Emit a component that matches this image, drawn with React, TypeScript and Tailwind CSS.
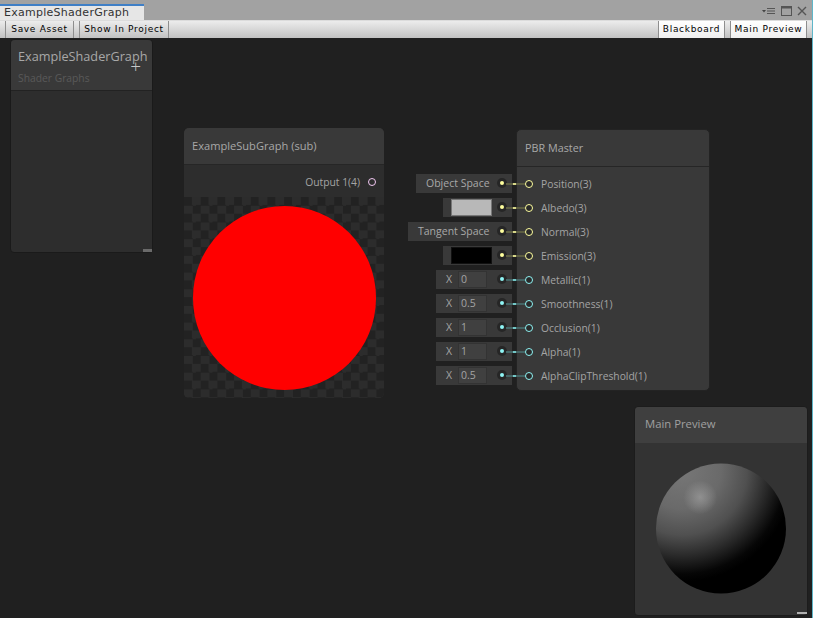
const ports = [
  { label: "Position(3)", kind: "text", value: "Object Space", width: "w-[96px]", color: "yellow" },
  { label: "Albedo(3)", kind: "color", value: "bg-[#b8b8b8] border-[#777777]", width: "w-[69px]", color: "yellow" },
  { label: "Normal(3)", kind: "text", value: "Tangent Space", width: "w-[104px]", color: "yellow" },
  { label: "Emission(3)", kind: "color", value: "bg-black border-[#111111]", width: "w-[69px]", color: "yellow" },
  { label: "Metallic(1)", kind: "x", value: "0", width: "w-[76px]", color: "cyan" },
  { label: "Smoothness(1)", kind: "x", value: "0.5", width: "w-[76px]", color: "cyan" },
  { label: "Occlusion(1)", kind: "x", value: "1", width: "w-[76px]", color: "cyan" },
  { label: "Alpha(1)", kind: "x", value: "1", width: "w-[76px]", color: "cyan" },
  { label: "AlphaClipThreshold(1)", kind: "x", value: "0.5", width: "w-[76px]", color: "cyan" },
];

const checker =
  "bg-[repeating-conic-gradient(#2c2c2c_0_25%,#222222_0_50%)] bg-[length:16.7px_16.7px]";

function ToolbarButton({ label, width, active }: { label: string; width: string; active?: boolean }) {
  return (
    <div
      className={`flex h-full items-center justify-center border-x border-[#8e8e8e] text-[9px] tracking-[0.7px] text-black ${width} ${
        active ? "bg-gradient-to-b from-white to-[#efefef]" : ""
      }`}
    >
      {label}
    </div>
  );
}

function PortRow({ port }: { port: (typeof ports)[number] }) {
  const yellow = port.color === "yellow";
  const ring = yellow ? "border-[#ffff9e]" : "border-[#8ff5f5]";
  const dot = yellow ? "bg-[#ffff9e]" : "bg-[#8ff5f5]";
  const wire = yellow ? "bg-[#5c5d42]" : "bg-[#446464]";
  const wireDash = yellow ? "bg-[#d8d88a]" : "bg-[#74c8c8]";

  return (
    <div className="relative flex h-[24px] items-center pl-[24px] pt-[2px] text-[10.3px] text-[#a4a4a4]">
      {/* inline control hanging off the left side of the node */}
      <div
        className={`absolute right-full top-[2px] mr-[5px] flex h-[19px] items-center bg-[#393939] ${port.width}`}
      >
        {port.kind === "text" && (
          <span className="ml-[10px] text-[10.5px] leading-[15px] text-[#a8a8a8]">{port.value}</span>
        )}
        {port.kind === "color" && (
          <div className={`ml-[8px] h-[17px] w-[41px] border ${port.value}`} />
        )}
        {port.kind === "x" && (
          <>
            <span className="ml-[10px] w-[12px] text-[10.5px]">X</span>
            <div className="flex h-[17px] w-[29px] items-center border border-[#333333] bg-[#404040] pl-[2px] text-[10.5px]">
              {port.value}
            </div>
          </>
        )}
        <div className="absolute right-[5px] top-[4px] flex h-[10px] w-[10px] items-center justify-center rounded-full bg-[#262626]">
          <div className={`h-[4px] w-[4px] rounded-full ${dot}`} />
        </div>
      </div>
      <div className={`absolute left-[-11px] top-[11px] h-[2px] w-[19px] ${wire}`} />
      <div className={`absolute left-[-4px] top-[11px] h-[2px] w-[3px] ${wireDash}`} />
      <div
        className={`absolute left-[8px] top-[8px] h-[8px] w-[8px] rounded-full border ${ring} bg-[#2a2a2a]`}
      />
      <span>{port.label}</span>
    </div>
  );
}

export default function App() {
  return (
    <div className="relative flex h-[618px] w-[813px] flex-col overflow-hidden border-r border-[#5fb6c9] font-['Open_Sans','Noto_Sans',sans-serif]">
      {/* window tab strip */}
      <div className="flex h-[20px] items-end justify-between bg-[#a2a2a2] font-['DejaVu_Sans',sans-serif]">
        <div className="h-[16px] w-[144px] border-t-2 border-[#3f7fc6] bg-[#e6e6e6] pl-[4px] text-[11px] leading-[14px] tracking-[0.27px] text-[#333]">
          ExampleShaderGraph
        </div>
        <div className="mb-[4px] mr-[5px] flex items-center gap-[5px]">
          <svg width="14" height="9" viewBox="0 0 14 9">
            <path d="M0 3h4L2 5.5z" fill="#444" />
            <path d="M5 1.5h8M5 4h8M5 6.5h8" stroke="#555" strokeWidth="1" />
          </svg>
          <svg width="11" height="10" viewBox="0 0 11 10">
            <rect x="0.5" y="0.5" width="10" height="9" fill="none" stroke="#555" />
            <rect x="0.5" y="0.5" width="10" height="2" fill="#555" />
          </svg>
          <svg width="10" height="10" viewBox="0 0 10 10">
            <path d="M1 1l8 8M9 1l-8 8" stroke="#555" strokeWidth="1.4" />
          </svg>
        </div>
      </div>

      {/* toolbar */}
      <div className="flex h-[18px] items-stretch justify-between border-t border-[#dcdcdc] bg-gradient-to-b from-[#ececec] to-[#c2c2c2] font-['DejaVu_Sans',sans-serif]">
        <div className="flex items-stretch gap-[5px] pl-[5px]">
          <ToolbarButton label="Save Asset" width="w-[69px]" />
          <ToolbarButton label="Show In Project" width="w-[90px]" />
        </div>
        <div className="flex items-stretch gap-[5px] pr-[5px]">
          <ToolbarButton label="Blackboard" width="w-[67px]" active />
          <ToolbarButton label="Main Preview" width="w-[77px]" active />
        </div>
      </div>

      {/* graph canvas */}
      <div className="relative flex-1 bg-[#202020]">
        {/* blackboard */}
        <div className="absolute left-[10px] top-[1px] h-[214px] w-[143px] rounded-[4px] border border-[#1a1a1a] bg-[#2d2d2d]">
          <div className="relative h-[51px] rounded-t-[4px] border-b border-[#222] bg-[#393939] pl-[7px]">
            <div className="pt-[6px] text-[12.7px] leading-[20px] text-[#a8a8a8]">ExampleShaderGraph</div>
            <div className="pt-[5px] text-[10.3px] leading-[15px] text-[#5a5a5a]">Shader Graphs</div>
            <span className="absolute right-[11px] top-[17px] text-[19px] font-light leading-[19px] text-[#c8c8c8]">+</span>
          </div>
          <div className="absolute bottom-0 right-0 h-[3px] w-[9px] bg-[#6a6a6a]" />
        </div>

        {/* sub graph node */}
        <div className="absolute left-[184px] top-[90px] h-[270px] w-[200px] overflow-hidden rounded-[5px] bg-[#2d2d2d]">
          <div className="h-[37px] border-b border-[#262626] bg-[#393939] pl-[8px] text-[11.1px] leading-[35px] text-[#a8a8a8]">
            ExampleSubGraph (sub)
          </div>
          <div className="flex h-[32px] items-center justify-end pr-[8px] pt-[2px] text-[10.3px] text-[#a4a4a4]">
            <span className="pt-[1px]">Output 1(4)</span>
            <div className="ml-[8px] h-[8px] w-[8px] rounded-full border border-[#f2c8f2]" />
          </div>
          <div className={`flex h-[201px] items-center justify-center ${checker}`}>
            <div className="ml-[1px] h-[184px] w-[183px] rounded-full bg-[#ff0000]" />
          </div>
        </div>

        {/* PBR master node */}
        <div className="absolute left-[516px] top-[91px] h-[262px] w-[194px] rounded-[5px] border border-[#232323] bg-[#393939]">
          <div className="h-[37px] border-b border-[#262626] pl-[8px] text-[10.8px] leading-[35px] text-[#a8a8a8]">
            PBR Master
          </div>
          <div className="pt-[5px]">
            {ports.map((port) => (
              <PortRow key={port.label} port={port} />
            ))}
          </div>
        </div>

        {/* main preview */}
        <div className="absolute left-[634px] top-[368px] h-[210px] w-[174px] rounded-[4px] border border-[#1c1c1c] bg-[#333333]">
          <div className="h-[36px] rounded-t-[4px] bg-[#3f3f3f] pl-[10px] text-[11.3px] leading-[34px] text-[#a0a0a0]">
            Main Preview
          </div>
          <div className="flex justify-center pt-[20px]">
            <svg width="130" height="131" viewBox="0 0 130 131">
              <defs>
                <radialGradient id="shade" cx="0.2" cy="0.05" r="1">
                  <stop offset="0" stopColor="#777777" />
                  <stop offset="0.3" stopColor="#6a6a6a" />
                  <stop offset="0.5" stopColor="#505050" />
                  <stop offset="0.65" stopColor="#2c2c2c" />
                  <stop offset="0.8" stopColor="#060606" />
                  <stop offset="0.86" stopColor="#000000" />
                </radialGradient>
                <radialGradient id="spec" cx="0.34" cy="0.26" r="0.13">
                  <stop offset="0" stopColor="#a8a8a8" stopOpacity="0.6" />
                  <stop offset="1" stopColor="#a8a8a8" stopOpacity="0" />
                </radialGradient>
              </defs>
              <circle cx="65" cy="65.5" r="65" fill="url(#shade)" />
              <circle cx="65" cy="65.5" r="65" fill="url(#spec)" />
            </svg>
          </div>
          <div className="absolute bottom-[1px] right-0 h-[2px] w-[10px] bg-[#b0b0b0]" />
        </div>
      </div>
    </div>
  );
}
